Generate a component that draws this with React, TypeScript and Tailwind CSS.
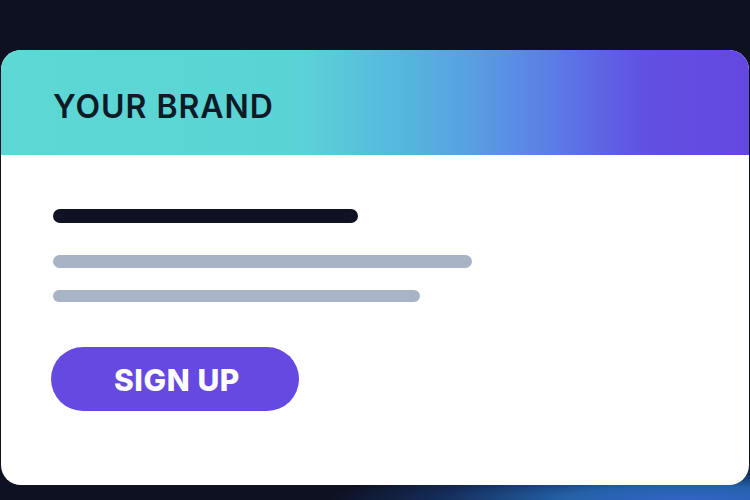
export default function App() {
  return (
    <div className="h-[500px] w-[750px] overflow-hidden bg-[#0e1122] bg-[radial-gradient(ellipse_360px_40px_at_92%_100%,#3464c8_0%,#2461a8_35%,#142c58_70%,#0e1122_100%)] pt-[50px] font-['Inter',sans-serif]">
      <div className="ml-[1px] flex h-[435px] w-[748px] flex-col overflow-hidden rounded-[20px] bg-white">
        {/* Header */}
        <div className="flex h-[105px] items-center bg-[linear-gradient(90deg,#5dd8d4_0%,#5bd3d6_40%,#55b8de_53%,#589fe2_63%,#5a7fe6_73%,#6150e2_86%,#6547df_100%)] px-[52px] pt-[9px]">
          <h1 className="text-[32px] font-semibold tracking-[0.03em] text-[#0e1a26]">YOUR BRAND</h1>
        </div>

        {/* Body */}
        <div className="flex flex-col px-[52px] pt-[54px]">
          <div className="h-[14px] w-[305px] rounded-full bg-[#0f1222]" />
          <div className="mt-[32px] h-[13px] w-[419px] rounded-full bg-[#a8b4c6]" />
          <div className="mt-[22px] h-[12px] w-[367px] rounded-full bg-[#a8b4c6]" />
          <button className="-ml-[2px] mt-[45px] flex h-[64px] w-[248px] items-center justify-center rounded-full bg-[#6549e0] pl-[4px] pt-[2px] text-[30px] font-extrabold tracking-[0.02em] text-white">
            SIGN UP
          </button>
        </div>
      </div>
    </div>
  )
}
